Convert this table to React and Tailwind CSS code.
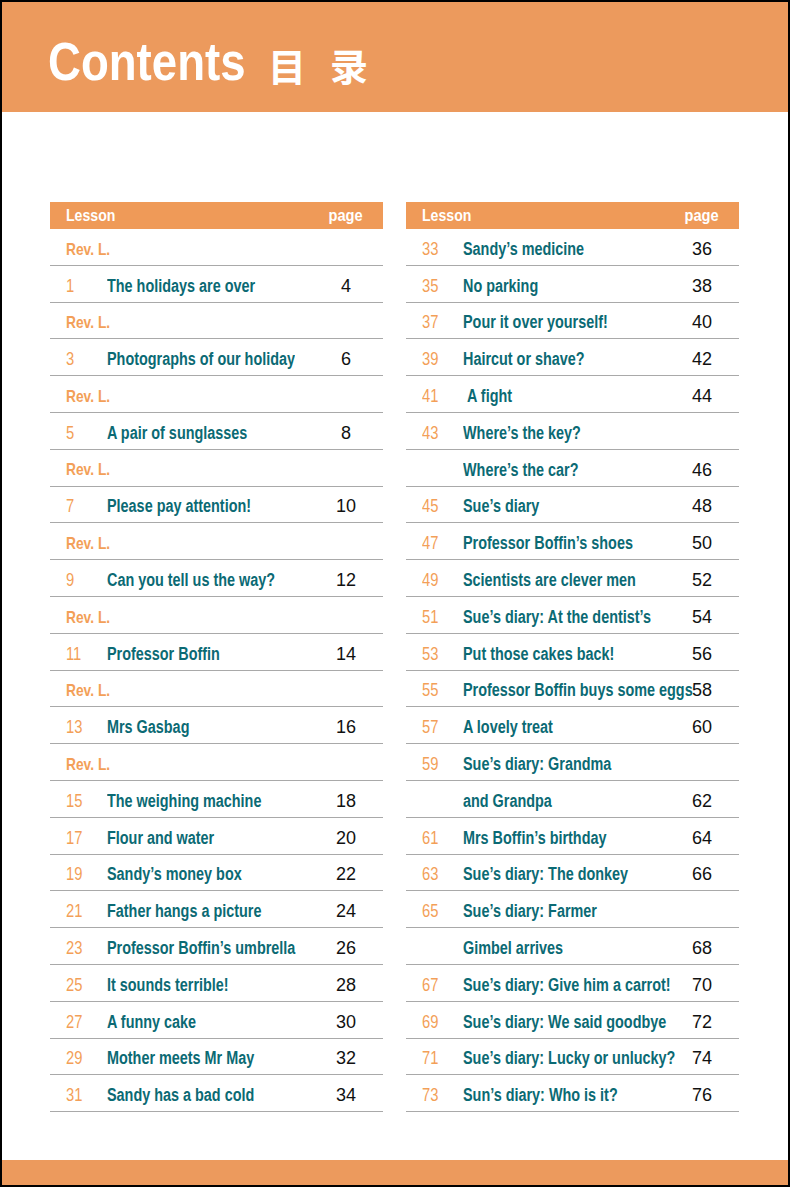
const LEFT = [
  ['rev'],
  ['1', 'The holidays are over', '4'],
  ['rev'],
  ['3', 'Photographs of our holiday', '6'],
  ['rev'],
  ['5', 'A pair of sunglasses', '8'],
  ['rev'],
  ['7', 'Please pay attention!', '10'],
  ['rev'],
  ['9', 'Can you tell us the way?', '12'],
  ['rev'],
  ['11', 'Professor Boffin', '14'],
  ['rev'],
  ['13', 'Mrs Gasbag', '16'],
  ['rev'],
  ['15', 'The weighing machine', '18'],
  ['17', 'Flour and water', '20'],
  ['19', 'Sandy’s money box', '22'],
  ['21', 'Father hangs a picture', '24'],
  ['23', 'Professor Boffin’s umbrella', '26'],
  ['25', 'It sounds terrible!', '28'],
  ['27', 'A funny cake', '30'],
  ['29', 'Mother meets Mr May', '32'],
  ['31', 'Sandy has a bad cold', '34'],
]

const RIGHT = [
  ['33', 'Sandy’s medicine', '36'],
  ['35', 'No parking', '38'],
  ['37', 'Pour it over yourself!', '40'],
  ['39', 'Haircut or shave?', '42'],
  ['41', '\u00a0A fight', '44'],
  ['43', 'Where’s the key?', ''],
  ['', 'Where’s the car?', '46'],
  ['45', 'Sue’s diary', '48'],
  ['47', 'Professor Boffin’s shoes', '50'],
  ['49', 'Scientists are clever men', '52'],
  ['51', 'Sue’s diary: At the dentist’s', '54'],
  ['53', 'Put those cakes back!', '56'],
  ['55', 'Professor Boffin buys some eggs', '58'],
  ['57', 'A lovely treat', '60'],
  ['59', 'Sue’s diary: Grandma', ''],
  ['', 'and Grandpa', '62'],
  ['61', 'Mrs Boffin’s birthday', '64'],
  ['63', 'Sue’s diary: The donkey', '66'],
  ['65', 'Sue’s diary: Farmer', ''],
  ['', 'Gimbel arrives', '68'],
  ['67', 'Sue’s diary: Give him a carrot!', '70'],
  ['69', 'Sue’s diary: We said goodbye', '72'],
  ['71', 'Sue’s diary: Lucky or unlucky?', '74'],
  ['73', 'Sun’s diary: Who is it?', '76'],
]

// no condensed face installed, so Arial-width bold is squeezed horizontally
const sans = "font-['Liberation_Sans',Arial,sans-serif]"

function Table({ rows }) {
  return (
    <div className="w-[333px]">
      {/* header bar */}
      <div className={`h-[27px] bg-[#ef9a58] flex items-center justify-between pl-[16px] pr-[20px] text-white text-[17px] font-bold ${sans}`}>
        <span className="inline-block origin-left scale-x-[0.83]">Lesson</span>
        <span className="inline-block origin-right scale-x-[0.86]">page</span>
      </div>
      {rows.map((r, i) => (
        <div key={i} className={`h-[36.8px] flex items-center pt-[5px] border-b border-[#a9a9a9] ${sans}`}>
          {r[0] === 'rev' ? (
            <span className="pl-[16px] text-[17px] font-bold text-[#f39f58]">
              <span className="inline-block origin-left scale-x-[0.81]">Rev. L.</span>
            </span>
          ) : (
            <>
              <span className="w-[57px] shrink-0 pl-[16px] text-[18px] text-[#f39f58]">
                <span className="inline-block origin-left scale-x-[0.82]">{r[0]}</span>
              </span>
              <span className="flex-1 min-w-0 whitespace-nowrap text-[18px] font-bold text-[#0b6a74]">
                <span className="inline-block origin-left scale-x-[0.8]">{r[1]}</span>
              </span>
              <span className="w-[40px] shrink-0 mr-[17px] text-center text-[18px] text-[#111]">{r[2]}</span>
            </>
          )}
        </div>
      ))}
    </div>
  )
}

export default function App() {
  return (
    <div className="w-[790px] h-[1187px] border-2 border-black bg-white flex flex-col">
      <div className="h-[110px] bg-[#ec9a5d] flex items-end pl-[46px] pb-[24px]">
        <div className={`w-[220px] shrink-0 text-white font-bold text-[53px] leading-none ${sans}`}>
          <span className="inline-block origin-left scale-x-[0.86]">Contents</span>
        </div>
        <span className="text-white font-bold text-[38px] leading-none tracking-[24px] pb-[4px] font-['Noto_Sans_CJK_SC',sans-serif]">目录</span>
      </div>
      <div className="flex-1 flex gap-[23px] pl-[48px] pt-[90px]">
        <Table rows={LEFT} />
        <Table rows={RIGHT} />
      </div>
      <div className="h-[25px] bg-[#ec9a5d]" />
    </div>
  )
}
